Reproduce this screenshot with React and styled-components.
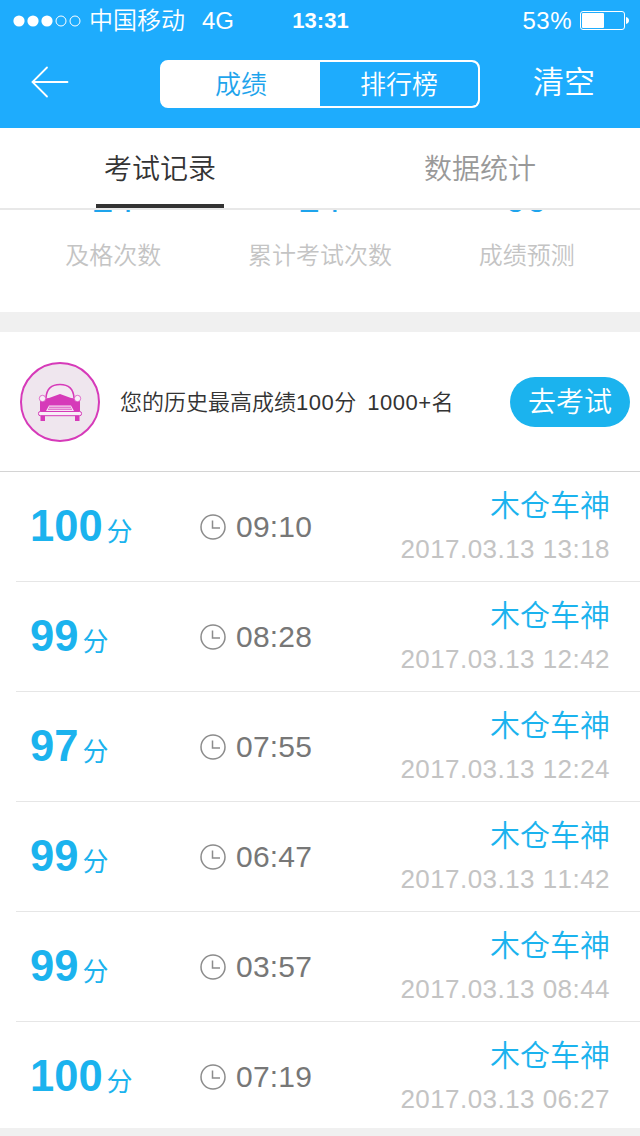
import React from "react";
import styled, { createGlobalStyle } from "styled-components";

const records = [
  { score: 100, time: "09:10", name: "木仓车神", date: "2017.03.13 13:18" },
  { score: 99, time: "08:28", name: "木仓车神", date: "2017.03.13 12:42" },
  { score: 97, time: "07:55", name: "木仓车神", date: "2017.03.13 12:24" },
  { score: 99, time: "06:47", name: "木仓车神", date: "2017.03.13 11:42" },
  { score: 99, time: "03:57", name: "木仓车神", date: "2017.03.13 08:44" },
  { score: 100, time: "07:19", name: "木仓车神", date: "2017.03.13 06:27" },
];

const stats = [
  { value: "24", label: "及格次数" },
  { value: "24", label: "累计考试次数" },
  { value: "99", label: "成绩预测" },
];

const SignalDots = () => (
  <svg width="68" height="12" viewBox="0 0 68 12">
    {[6, 20, 34].map((x) => (
      <circle key={x} cx={x} cy="6" r="5.6" fill="#fff" />
    ))}
    {[48, 62].map((x) => (
      <circle key={x} cx={x} cy="6" r="5" fill="none" stroke="#fff" />
    ))}
  </svg>
);

const Battery = () => (
  <svg width="50" height="20" viewBox="0 0 50 20">
    <rect x="0.5" y="0.5" width="44" height="18" rx="2.5" fill="none" stroke="#fff" />
    <rect x="2" y="2" width="22" height="15" rx="1" fill="#fff" />
    <path d="M46 6c1.9.4 3 1.7 3 3.5s-1.1 3.1-3 3.5z" fill="#fff" />
  </svg>
);

const BackArrow = () => (
  <svg width="38" height="32" viewBox="0 0 38 32" fill="none" stroke="#fff" strokeWidth="1.8">
    <path d="M16 1.5L1.5 16L16 30.5M1.5 16H36.5" strokeLinecap="round" />
  </svg>
);

const ClockIcon = () => (
  <svg width="26" height="26" viewBox="0 0 26 26" fill="none" stroke="#8c8c8c" strokeWidth="1.5">
    <circle cx="13" cy="13" r="12" />
    <path d="M12.5 6.5V14H20" />
  </svg>
);

const CarBadge = () => (
  <svg width="80" height="80" viewBox="0 0 80 80">
    <circle cx="40" cy="40" r="39" fill="#efe6ee" stroke="#d63ab9" strokeWidth="2" />
    <path
      d="M26 36C26.5 27 31 22.5 40 22.5S53.500 27 54 36"
      fill="#f3e9f2"
      stroke="#d63ab9"
      strokeWidth="1.5"
    />
    <path d="M20 37L29 36L40 32L51 36L60 37V50H20Z" fill="#d63ab9" />
    <circle cx="22.5" cy="36.5" r="3.2" fill="#f8eef7" stroke="#d63ab9" strokeWidth="0.7" />
    <circle cx="57.5" cy="36.5" r="3.2" fill="#f8eef7" stroke="#d63ab9" strokeWidth="0.7" />
    <path d="M29 43.5H51L54 49H26Z" fill="#f6e3f3" />
    <path d="M29 45.2H51M28 47.2H52" stroke="#d63ab9" strokeWidth="0.9" />
    <rect x="20.5" y="52" width="4.5" height="7" fill="#d63ab9" />
    <rect x="55" y="52" width="4.5" height="7" fill="#d63ab9" />
    <rect x="18.5" y="49.5" width="43" height="4.2" rx="1.8" fill="#f8eef7" stroke="#d63ab9" />
  </svg>
);

const App = () => {
  return (
    <Page>
      <GlobalStyle />
      <Header>
        <StatusBar>
          <Carrier>
            <SignalDots />
            <span>中国移动</span>
            <Network>4G</Network>
          </Carrier>
          <Clock>13:31</Clock>
          <Power>
            <span>53%</span>
            <Battery />
          </Power>
        </StatusBar>
        <NavBar>
          <BackButton>
            <BackArrow />
          </BackButton>
          <Segments>
            <Segment $active>成绩</Segment>
            <Segment>排行榜</Segment>
          </Segments>
          <ClearButton>清空</ClearButton>
        </NavBar>
      </Header>

      <Tabs>
        <Tab>
          <TabLabel $active>考试记录</TabLabel>
        </Tab>
        <Tab>
          <TabLabel>数据统计</TabLabel>
        </Tab>
      </Tabs>

      {/* scrolled up under the tabs */}
      <Stats>
        {stats.map((item) => (
          <Stat key={item.label}>
            <StatValue>{item.value}</StatValue>
            <StatLabel>{item.label}</StatLabel>
          </Stat>
        ))}
      </Stats>

      <Banner>
        <CarBadge />
        <BannerText>
          <span>
            您的历史最高成绩<Num>100</Num>分
          </span>
          <span>
            <Num>1000+</Num>名
          </span>
        </BannerText>
        <ExamButton>去考试</ExamButton>
      </Banner>

      <List>
        {records.map((item) => (
          <Row key={item.date}>
            <Score>
              <ScoreValue>{item.score}</ScoreValue>
              <ScoreUnit>分</ScoreUnit>
            </Score>
            <Duration>
              <ClockIcon />
              <span>{item.time}</span>
            </Duration>
            <Info>
              <Name>{item.name}</Name>
              <DateText>{item.date}</DateText>
            </Info>
          </Row>
        ))}
      </List>
    </Page>
  );
};

export default App;

const GlobalStyle = createGlobalStyle`
  * {
    box-sizing: border-box;
  }
  body {
    margin: 0;
    background: #f0f0f0;
  }
  svg {
    display: block;
    flex: none;
  }
  button {
    border: none;
    padding: 0;
    background: none;
    font: inherit;
    color: inherit;
  }
`;

const Page = styled.div`
  width: 640px;
  height: 1136px;
  overflow: hidden;
  background: #f0f0f0;
  font-family: "Liberation Sans", "Noto Sans CJK SC", sans-serif;
  font-weight: 350;
  font-kerning: none;
  white-space: nowrap;
`;
const Header = styled.div`
  height: 128px;
  background: #1eacfd;
  color: #fff;
`;
const StatusBar = styled.div`
  height: 40px;
  padding: 1px 10px 0 13px;
  display: grid;
  grid-template-columns: 1fr auto 1fr;
  align-items: center;
  font-size: 24px;
  line-height: 40px;
`;
const Carrier = styled.div`
  display: flex;
  align-items: center;
  gap: 8px;
`;
const Network = styled.span`
  margin-left: 9px;
`;
const Clock = styled.div`
  margin-right: 2px;
  font-size: 22px;
  font-weight: bold;
`;
const Power = styled.div`
  display: flex;
  justify-content: flex-end;
  align-items: center;
  gap: 8px;
  letter-spacing: 0.5px;
`;
const NavBar = styled.div`
  height: 88px;
  display: grid;
  grid-template-columns: 160px 320px 160px;
  align-items: center;
`;
const BackButton = styled.button`
  margin: -4px 0 0 31px;
`;
const Segments = styled.div`
  height: 48px;
  display: flex;
  border: 2px solid #fff;
  border-radius: 8px;
  background: #fff;
  overflow: hidden;
`;
const Segment = styled.div`
  flex: 0 0 50%;
  text-align: center;
  font-size: 26px;
  line-height: 46px;
  background: ${(props) => (props.$active ? "#fff" : "#1eacfd")};
  color: ${(props) => (props.$active ? "#1ea4ec" : "#fff")};
  border-radius: ${(props) => (props.$active ? "0" : "0 6px 6px 0")};
`;
const ClearButton = styled.button`
  padding-left: 8px;
  font-size: 31px;
  line-height: 48px;
  margin-top: -2px;
`;
const Tabs = styled.div`
  height: 82px;
  display: flex;
  background: #fff;
  border-bottom: 2px solid #e8e8e8;
`;
const Tab = styled.div`
  flex: 1;
  display: flex;
  justify-content: center;
`;
const TabLabel = styled.div`
  width: 128px;
  height: 80px;
  text-align: center;
  font-size: 28px;
  line-height: 84px;
  color: ${(props) => (props.$active ? "#333" : "#999")};
  border-bottom: 4px solid ${(props) => (props.$active ? "#333" : "transparent")};
`;
const Stats = styled.div`
  height: 102px;
  padding: 0 10px;
  display: grid;
  grid-template-columns: repeat(3, 1fr);
  align-content: end;
  overflow: hidden;
  background: #fff;
`;
const Stat = styled.div`
  text-align: center;
  padding-bottom: 38px;
`;
const StatValue = styled.div`
  font-size: 38px;
  line-height: 44px;
  margin-bottom: 17px;
  color: #1ea4ec;
`;
const StatLabel = styled.div`
  font-size: 24px;
  line-height: 36px;
  color: #c4c4c4;
`;
const Banner = styled.div`
  height: 140px;
  margin-top: 20px;
  padding: 0 10px 0 20px;
  display: flex;
  align-items: center;
  background: #fff;
  border-bottom: 1px solid #d4d4d4;
`;
const BannerText = styled.div`
  flex: 1;
  margin: 0 0 3px 20px;
  display: flex;
  gap: 11px;
  font-size: 22px;
  color: #333;
`;
const Num = styled.span`
  letter-spacing: 0.5px;
`;
const ExamButton = styled.button`
  width: 120px;
  height: 50px;
  border-radius: 25px;
  background: #1bb3ee;
  color: #fff;
  font-size: 28px;
  line-height: 52px;
`;
const List = styled.div`
  height: 656px;
  overflow: hidden;
  background: #fff;
`;
const Row = styled.div`
  height: 110px;
  margin-left: 16px;
  padding: 0 30px 0 14px;
  display: grid;
  grid-template-columns: 170px 1fr auto;
  border-bottom: 1px solid #e6e6e6;
`;
const Score = styled.div`
  display: flex;
  align-items: baseline;
  line-height: 108px;
  color: #1bb3ee;
`;
const ScoreValue = styled.span`
  font-size: 43.5px;
  font-weight: bold;
`;
const ScoreUnit = styled.span`
  margin-left: 4px;
  font-size: 26px;
  font-weight: 400;
`;
const Duration = styled.div`
  display: flex;
  align-items: center;
  gap: 10px;
  padding-bottom: 5px;
  font-size: 30px;
  letter-spacing: 0.2px;
  color: #777;
`;
const Info = styled.div`
  display: flex;
  flex-direction: column;
  align-items: flex-end;
`;
const Name = styled.div`
  margin-top: 12px;
  font-size: 30px;
  line-height: 44px;
  color: #1bb3ee;
`;
const DateText = styled.div`
  font-size: 26px;
  letter-spacing: 0.45px;
  line-height: 42px;
  color: #c4c4c4;
`;
